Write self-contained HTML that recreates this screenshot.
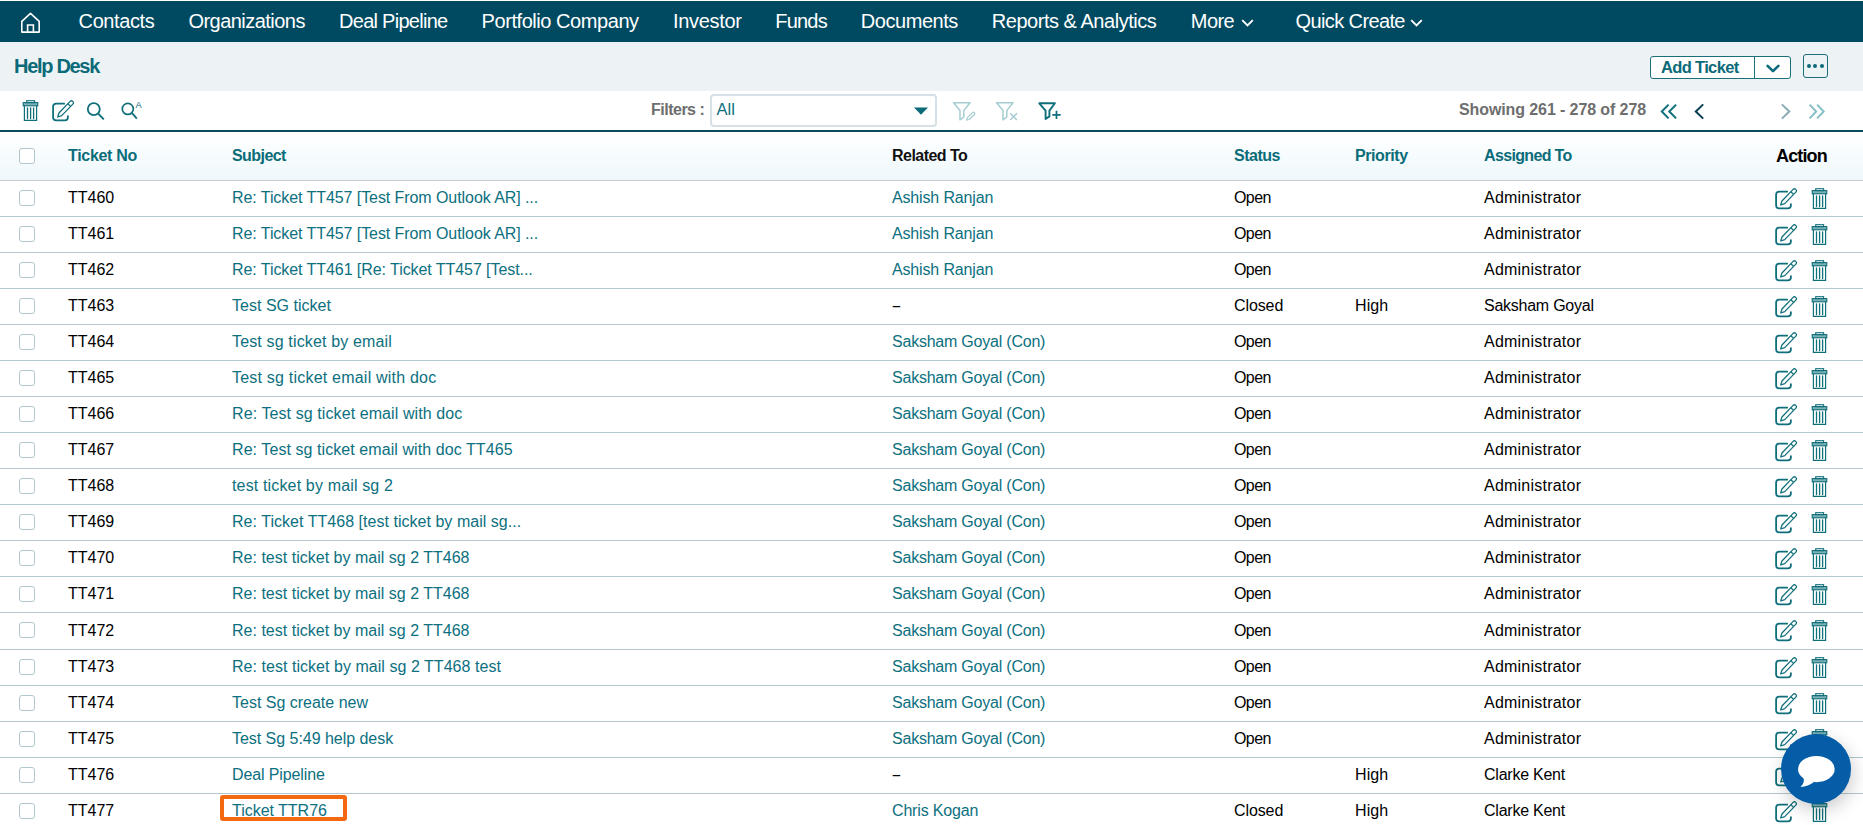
<!DOCTYPE html>
<html><head><meta charset="utf-8"><style>
*{margin:0;padding:0;box-sizing:border-box}
html,body{width:1863px;height:825px;overflow:hidden;background:#fff;font-family:"Liberation Sans",sans-serif}
.abs{position:absolute}
#nav{position:absolute;left:0;top:1px;width:1863px;height:41px;background:#004a61}
.nv{position:absolute;top:0;line-height:40px;font-size:20px;color:#fff;white-space:nowrap;letter-spacing:-0.4px}
#title{position:absolute;left:0;top:42px;width:1863px;height:49px;background:#edf2f5}
#tool{position:absolute;left:0;top:91px;width:1863px;height:39px;background:#fff}
#dark{position:absolute;left:0;top:130px;width:1863px;height:2px;background:#0a4a5c}
#head{position:absolute;left:0;top:132px;width:1863px;height:48px;background:linear-gradient(#fff,#eef8fc)}
.hd{position:absolute;top:0;line-height:48px;font-size:16px;font-weight:bold;color:#0b6c79;white-space:nowrap;letter-spacing:-0.45px}
.row{position:absolute;left:0;width:1863px}
.sep{position:absolute;left:0;width:1863px;height:1px;background:#b3c8cf}
.c{position:absolute;font-size:16px;line-height:35px;white-space:nowrap}
.lnk{color:#0c7080}
.blk{color:#000}
.cb{position:absolute;left:19px;width:16px;height:16px;border:1.3px solid #b1c6cd;border-radius:3px;background:#fff}
.ic{position:absolute;line-height:0}
</style></head><body>
<div id="nav">
<svg class="abs" style="left:20px;top:11px" width="22" height="23" viewBox="0 0 22 23"><path d="M1.8 9.4L10.5 1.3L19.2 9.4V20.1H1.8Z" fill="none" stroke="#fff" stroke-width="1.6" stroke-linejoin="round"/><path d="M7.6 20.1V13H13.4V20.1" fill="none" stroke="#fff" stroke-width="1.6"/></svg>
<span class="nv" style="left:78.6px;letter-spacing:-0.4px">Contacts</span><span class="nv" style="left:188.4px;letter-spacing:-0.53px">Organizations</span><span class="nv" style="left:339px;letter-spacing:-0.72px">Deal Pipeline</span><span class="nv" style="left:481.6px;letter-spacing:-0.44px">Portfolio Company</span><span class="nv" style="left:673px;letter-spacing:-0.33px">Investor</span><span class="nv" style="left:775.2px;letter-spacing:-0.76px">Funds</span><span class="nv" style="left:860.8px;letter-spacing:-0.45px">Documents</span><span class="nv" style="left:991.8px;letter-spacing:-0.47px">Reports &amp; Analytics</span><span class="nv" style="left:1190.8px;letter-spacing:-0.55px">More</span><span class="nv" style="left:1295.6px;letter-spacing:-0.62px">Quick Create</span><svg class="abs" style="left:1241px;top:17.8px" width="13" height="8" viewBox="0 0 13 8"><path d="M1.2 1.2L6.5 6.5L11.8 1.2" fill="none" stroke="#fff" stroke-width="1.9"/></svg><svg class="abs" style="left:1410px;top:17.8px" width="13" height="8" viewBox="0 0 13 8"><path d="M1.2 1.2L6.5 6.5L11.8 1.2" fill="none" stroke="#fff" stroke-width="1.9"/></svg>
</div>
<div id="title">
<span class="abs" style="left:14px;top:0px;line-height:49px;font-size:20px;font-weight:bold;color:#0b6a78;letter-spacing:-1.3px">Help Desk</span>
<div class="abs" style="left:1650px;top:14px;width:141px;height:23px;border:1px solid #1a6f7b;border-radius:3px;background:#fff"></div>
<div class="abs" style="left:1754px;top:14px;width:1px;height:23px;background:#1a6f7b"></div>
<span class="abs" style="left:1661px;top:14px;line-height:23px;font-size:16.5px;font-weight:bold;color:#0b6a78;letter-spacing:-0.65px">Add Ticket</span>
<svg class="abs" style="left:1766px;top:22px" width="14" height="9" viewBox="0 0 14 9"><path d="M1.6 1.8L7 7.2L12.4 1.8" fill="none" stroke="#0b6a78" stroke-width="2.6" stroke-linecap="round" stroke-linejoin="round"/></svg>
<div class="abs" style="left:1803px;top:12px;width:25px;height:24px;border:1px solid #1a6f7b;border-radius:3px"></div>
<div class="abs" style="left:1807px;top:22px;width:4px;height:4px;border-radius:2px;background:#0b6a78"></div>
<div class="abs" style="left:1813.3px;top:22px;width:4px;height:4px;border-radius:2px;background:#0b6a78"></div>
<div class="abs" style="left:1820px;top:22px;width:4px;height:4px;border-radius:2px;background:#0b6a78"></div>
</div>
<div id="tool">
<div class="ic" style="left:22px;top:7.7px"><svg width="17" height="23" viewBox="0 0 17 23"><rect x="4.7" y="1.7" width="7.9" height="1.9" fill="none" stroke="#0f6f7a" stroke-width="1.1"/><rect x="1.2" y="3.6" width="14.6" height="3.2" fill="#0f6f7a" fill-opacity="0.55" stroke="#0f6f7a" stroke-width="1.1"/><path d="M2.4 6.8V21.4H14.6V6.8" fill="none" stroke="#0f6f7a" stroke-width="1.2"/><path d="M5.5 8.8V19.6M8.6 8.8V19.6M11.6 8.8V19.6" stroke="#0f6f7a" stroke-width="1.3" stroke-linecap="round"/></svg></div>
<div class="ic" style="left:51px;top:8.8px"><svg width="24" height="22" viewBox="0 0 24 22"><path d="M13.9 3.7H5.2Q2.1 3.7 2.1 6.8V17.3Q2.1 20.4 5.2 20.4H13.8Q16.9 20.4 16.9 17.3V15.5" fill="none" stroke="#0f6f7a" stroke-width="1.8"/><g transform="translate(6.7 17.0) rotate(-46)"><path d="M0 0L3.8 -1.9H19.8A1.9 1.9 0 0 1 19.8 1.9H3.8Z" fill="none" stroke="#0f6f7a" stroke-width="1.25" stroke-linejoin="round"/><path d="M16.6 -1.9V1.9" stroke="#0f6f7a" stroke-width="1.25"/></g></svg></div>
<svg class="abs" style="left:85px;top:9px" width="21" height="21" viewBox="0 0 21 21"><circle cx="8.8" cy="9.1" r="6.0" fill="none" stroke="#0f6f7a" stroke-width="1.8"/><path d="M13.2 13.6L18.8 19.4" stroke="#0f6f7a" stroke-width="1.9"/></svg>
<svg class="abs" style="left:119px;top:9px" width="26" height="21" viewBox="0 0 26 21"><circle cx="8.8" cy="8.9" r="5.5" fill="none" stroke="#0f6f7a" stroke-width="1.7"/><path d="M12.8 12.9L17.8 18.6" stroke="#0f6f7a" stroke-width="1.8"/></svg><span class="abs" style="left:135.4px;top:9.1px;font-size:9.3px;line-height:10px;color:#0f6f7a">A</span>
<span class="abs" style="left:651px;top:0;line-height:38px;font-size:16px;font-weight:bold;color:#6e6e6e;letter-spacing:-0.5px">Filters :</span>
<div class="abs" style="left:710px;top:3px;width:227px;height:33px;border:2px solid #d5e1e6;border-radius:4px;background:#fff"></div>
<span class="abs" style="left:716.5px;top:2px;line-height:32px;font-size:16.5px;color:#0c7080">All</span>
<svg class="abs" style="left:913px;top:16px" width="16" height="8" viewBox="0 0 16 8"><path d="M1 0.5H15L8 7.8Z" fill="#0b6a78"/></svg>
<svg class="abs" style="left:951px;top:9px" width="27" height="23" viewBox="0 0 27 23"><path d="M2.6 2.8H19L12.8 10.6V17L9 19.8V10.6Z" fill="none" stroke="#a6cdd1" stroke-width="1.5" stroke-linejoin="round"/><g transform="translate(15.6 20.2) rotate(-44)"><path d="M0 0L2.3 -1.3H9.6A1.3 1.3 0 0 1 9.6 1.3H2.3Z" fill="none" stroke="#a6cdd1" stroke-width="1.2" stroke-linejoin="round"/></g></svg>
<svg class="abs" style="left:994px;top:9px" width="27" height="23" viewBox="0 0 27 23"><path d="M2.6 2.8H19L12.8 10.6V17L9 19.8V10.6Z" fill="none" stroke="#a6cdd1" stroke-width="1.5" stroke-linejoin="round"/><path d="M16.2 13.2L23 20M23 13.2L16.2 20" stroke="#a6cdd1" stroke-width="1.5"/></svg>
<svg class="abs" style="left:1037px;top:9px" width="27" height="23" viewBox="0 0 27 23"><path d="M2.3 3.3H17.9L12.4 10.6V16.4L8.6 19V10.6Z" fill="none" stroke="#0f6f7a" stroke-width="1.9" stroke-linejoin="round"/><path d="M19.5 10.7V19.1M15.3 14.9H23.7" stroke="#0f6f7a" stroke-width="1.7"/></svg>
<span class="abs" style="left:1459px;top:0;line-height:37px;font-size:16px;font-weight:bold;color:#6e6e6e;letter-spacing:-0.1px">Showing 261 - 278 of 278</span>
<svg class="abs" style="left:1659px;top:12px" width="20" height="18" viewBox="0 0 20 18"><path d="M9.6 1.6L2.8 8.5L9.6 15.4M17.1 1.6L10.3 8.5L17.1 15.4" fill="none" stroke="#0f6f7a" stroke-width="2"/></svg>
<svg class="abs" style="left:1692px;top:11px" width="14" height="19" viewBox="0 0 14 19"><path d="M11.2 2.4L3.8 9.5L11.2 16.6" fill="none" stroke="#083d52" stroke-width="2"/></svg>
<svg class="abs" style="left:1779px;top:11px" width="14" height="19" viewBox="0 0 14 19"><path d="M2.9 2.4L10.3 9.5L2.9 16.6" fill="none" stroke="#8aa9b5" stroke-width="2"/></svg>
<svg class="abs" style="left:1807px;top:12px" width="20" height="18" viewBox="0 0 20 18"><path d="M2.6 1.6L9.2 8.5L2.6 15.4M10.1 1.6L16.7 8.5L10.1 15.4" fill="none" stroke="#86c0c5" stroke-width="2"/></svg>
</div>
<div id="dark"></div>
<div id="head">
<div class="cb" style="top:16px"></div>
<span class="hd" style="left:68px;letter-spacing:-0.312px">Ticket No</span>
<span class="hd" style="left:232px;letter-spacing:-0.562px">Subject</span>
<span class="hd" style="left:892px;color:#111;letter-spacing:-0.528px">Related To</span>
<span class="hd" style="left:1234px;letter-spacing:-0.5px">Status</span>
<span class="hd" style="left:1355px;letter-spacing:-0.411px">Priority</span>
<span class="hd" style="left:1484px;letter-spacing:-0.65px">Assigned To</span>
<span class="hd" style="left:1776px;color:#000;font-size:18px;letter-spacing:-0.85px">Action</span>
</div>
<div class="sep" style="top:180px;background:#c9cdd0"></div>
<div class="cb" style="top:190px"></div><span class="c blk" style="left:68px;top:180px;letter-spacing:0.0px">TT460</span><span class="c lnk" style="left:232px;top:180px;letter-spacing:-0.071px">Re: Ticket TT457 [Test From Outlook AR] ...</span><span class="c lnk" style="left:892px;top:180px;letter-spacing:-0.156px">Ashish Ranjan</span><span class="c blk" style="left:1234px;top:180px;letter-spacing:-0.583px">Open</span><span class="c blk" style="left:1484px;top:180px;letter-spacing:0.229px">Administrator</span><div class="ic" style="left:1774px;top:187.5px"><svg width="24" height="22" viewBox="0 0 24 22"><path d="M13.9 3.7H5.2Q2.1 3.7 2.1 6.8V17.3Q2.1 20.4 5.2 20.4H13.8Q16.9 20.4 16.9 17.3V15.5" fill="none" stroke="#0f6f7a" stroke-width="1.8"/><g transform="translate(6.7 17.0) rotate(-46)"><path d="M0 0L3.8 -1.9H19.8A1.9 1.9 0 0 1 19.8 1.9H3.8Z" fill="none" stroke="#0f6f7a" stroke-width="1.25" stroke-linejoin="round"/><path d="M16.6 -1.9V1.9" stroke="#0f6f7a" stroke-width="1.25"/></g></svg></div><div class="ic" style="left:1810.8px;top:187px"><svg width="17" height="23" viewBox="0 0 17 23"><rect x="4.7" y="1.7" width="7.9" height="1.9" fill="none" stroke="#0f6f7a" stroke-width="1.1"/><rect x="1.2" y="3.6" width="14.6" height="3.2" fill="#0f6f7a" fill-opacity="0.55" stroke="#0f6f7a" stroke-width="1.1"/><path d="M2.4 6.8V21.4H14.6V6.8" fill="none" stroke="#0f6f7a" stroke-width="1.2"/><path d="M5.5 8.8V19.6M8.6 8.8V19.6M11.6 8.8V19.6" stroke="#0f6f7a" stroke-width="1.3" stroke-linecap="round"/></svg></div><div class="sep" style="top:216px"></div><div class="cb" style="top:226px"></div><span class="c blk" style="left:68px;top:216px;letter-spacing:0.0px">TT461</span><span class="c lnk" style="left:232px;top:216px;letter-spacing:-0.071px">Re: Ticket TT457 [Test From Outlook AR] ...</span><span class="c lnk" style="left:892px;top:216px;letter-spacing:-0.156px">Ashish Ranjan</span><span class="c blk" style="left:1234px;top:216px;letter-spacing:-0.583px">Open</span><span class="c blk" style="left:1484px;top:216px;letter-spacing:0.229px">Administrator</span><div class="ic" style="left:1774px;top:223.5px"><svg width="24" height="22" viewBox="0 0 24 22"><path d="M13.9 3.7H5.2Q2.1 3.7 2.1 6.8V17.3Q2.1 20.4 5.2 20.4H13.8Q16.9 20.4 16.9 17.3V15.5" fill="none" stroke="#0f6f7a" stroke-width="1.8"/><g transform="translate(6.7 17.0) rotate(-46)"><path d="M0 0L3.8 -1.9H19.8A1.9 1.9 0 0 1 19.8 1.9H3.8Z" fill="none" stroke="#0f6f7a" stroke-width="1.25" stroke-linejoin="round"/><path d="M16.6 -1.9V1.9" stroke="#0f6f7a" stroke-width="1.25"/></g></svg></div><div class="ic" style="left:1810.8px;top:223px"><svg width="17" height="23" viewBox="0 0 17 23"><rect x="4.7" y="1.7" width="7.9" height="1.9" fill="none" stroke="#0f6f7a" stroke-width="1.1"/><rect x="1.2" y="3.6" width="14.6" height="3.2" fill="#0f6f7a" fill-opacity="0.55" stroke="#0f6f7a" stroke-width="1.1"/><path d="M2.4 6.8V21.4H14.6V6.8" fill="none" stroke="#0f6f7a" stroke-width="1.2"/><path d="M5.5 8.8V19.6M8.6 8.8V19.6M11.6 8.8V19.6" stroke="#0f6f7a" stroke-width="1.3" stroke-linecap="round"/></svg></div><div class="sep" style="top:252px"></div><div class="cb" style="top:262px"></div><span class="c blk" style="left:68px;top:252px;letter-spacing:0.0px">TT462</span><span class="c lnk" style="left:232px;top:252px;letter-spacing:-0.065px">Re: Ticket TT461 [Re: Ticket TT457 [Test...</span><span class="c lnk" style="left:892px;top:252px;letter-spacing:-0.156px">Ashish Ranjan</span><span class="c blk" style="left:1234px;top:252px;letter-spacing:-0.583px">Open</span><span class="c blk" style="left:1484px;top:252px;letter-spacing:0.229px">Administrator</span><div class="ic" style="left:1774px;top:259.5px"><svg width="24" height="22" viewBox="0 0 24 22"><path d="M13.9 3.7H5.2Q2.1 3.7 2.1 6.8V17.3Q2.1 20.4 5.2 20.4H13.8Q16.9 20.4 16.9 17.3V15.5" fill="none" stroke="#0f6f7a" stroke-width="1.8"/><g transform="translate(6.7 17.0) rotate(-46)"><path d="M0 0L3.8 -1.9H19.8A1.9 1.9 0 0 1 19.8 1.9H3.8Z" fill="none" stroke="#0f6f7a" stroke-width="1.25" stroke-linejoin="round"/><path d="M16.6 -1.9V1.9" stroke="#0f6f7a" stroke-width="1.25"/></g></svg></div><div class="ic" style="left:1810.8px;top:259px"><svg width="17" height="23" viewBox="0 0 17 23"><rect x="4.7" y="1.7" width="7.9" height="1.9" fill="none" stroke="#0f6f7a" stroke-width="1.1"/><rect x="1.2" y="3.6" width="14.6" height="3.2" fill="#0f6f7a" fill-opacity="0.55" stroke="#0f6f7a" stroke-width="1.1"/><path d="M2.4 6.8V21.4H14.6V6.8" fill="none" stroke="#0f6f7a" stroke-width="1.2"/><path d="M5.5 8.8V19.6M8.6 8.8V19.6M11.6 8.8V19.6" stroke="#0f6f7a" stroke-width="1.3" stroke-linecap="round"/></svg></div><div class="sep" style="top:288px"></div><div class="cb" style="top:298px"></div><span class="c blk" style="left:68px;top:288px;letter-spacing:0.0px">TT463</span><span class="c lnk" style="left:232px;top:288px;letter-spacing:0.022px">Test SG ticket</span><span class="c blk" style="left:892px;top:288px;letter-spacing:-1.75px">--</span><span class="c blk" style="left:1234px;top:288px;letter-spacing:-0.1px">Closed</span><span class="c blk" style="left:1355px;top:288px;letter-spacing:0.083px">High</span><span class="c blk" style="left:1484px;top:288px;letter-spacing:-0.25px">Saksham Goyal</span><div class="ic" style="left:1774px;top:295.5px"><svg width="24" height="22" viewBox="0 0 24 22"><path d="M13.9 3.7H5.2Q2.1 3.7 2.1 6.8V17.3Q2.1 20.4 5.2 20.4H13.8Q16.9 20.4 16.9 17.3V15.5" fill="none" stroke="#0f6f7a" stroke-width="1.8"/><g transform="translate(6.7 17.0) rotate(-46)"><path d="M0 0L3.8 -1.9H19.8A1.9 1.9 0 0 1 19.8 1.9H3.8Z" fill="none" stroke="#0f6f7a" stroke-width="1.25" stroke-linejoin="round"/><path d="M16.6 -1.9V1.9" stroke="#0f6f7a" stroke-width="1.25"/></g></svg></div><div class="ic" style="left:1810.8px;top:295px"><svg width="17" height="23" viewBox="0 0 17 23"><rect x="4.7" y="1.7" width="7.9" height="1.9" fill="none" stroke="#0f6f7a" stroke-width="1.1"/><rect x="1.2" y="3.6" width="14.6" height="3.2" fill="#0f6f7a" fill-opacity="0.55" stroke="#0f6f7a" stroke-width="1.1"/><path d="M2.4 6.8V21.4H14.6V6.8" fill="none" stroke="#0f6f7a" stroke-width="1.2"/><path d="M5.5 8.8V19.6M8.6 8.8V19.6M11.6 8.8V19.6" stroke="#0f6f7a" stroke-width="1.3" stroke-linecap="round"/></svg></div><div class="sep" style="top:324px"></div><div class="cb" style="top:334px"></div><span class="c blk" style="left:68px;top:324px;letter-spacing:0.0px">TT464</span><span class="c lnk" style="left:232px;top:324px;letter-spacing:0.151px">Test sg ticket by email</span><span class="c lnk" style="left:892px;top:324px;letter-spacing:-0.222px">Saksham Goyal (Con)</span><span class="c blk" style="left:1234px;top:324px;letter-spacing:-0.583px">Open</span><span class="c blk" style="left:1484px;top:324px;letter-spacing:0.229px">Administrator</span><div class="ic" style="left:1774px;top:331.5px"><svg width="24" height="22" viewBox="0 0 24 22"><path d="M13.9 3.7H5.2Q2.1 3.7 2.1 6.8V17.3Q2.1 20.4 5.2 20.4H13.8Q16.9 20.4 16.9 17.3V15.5" fill="none" stroke="#0f6f7a" stroke-width="1.8"/><g transform="translate(6.7 17.0) rotate(-46)"><path d="M0 0L3.8 -1.9H19.8A1.9 1.9 0 0 1 19.8 1.9H3.8Z" fill="none" stroke="#0f6f7a" stroke-width="1.25" stroke-linejoin="round"/><path d="M16.6 -1.9V1.9" stroke="#0f6f7a" stroke-width="1.25"/></g></svg></div><div class="ic" style="left:1810.8px;top:331px"><svg width="17" height="23" viewBox="0 0 17 23"><rect x="4.7" y="1.7" width="7.9" height="1.9" fill="none" stroke="#0f6f7a" stroke-width="1.1"/><rect x="1.2" y="3.6" width="14.6" height="3.2" fill="#0f6f7a" fill-opacity="0.55" stroke="#0f6f7a" stroke-width="1.1"/><path d="M2.4 6.8V21.4H14.6V6.8" fill="none" stroke="#0f6f7a" stroke-width="1.2"/><path d="M5.5 8.8V19.6M8.6 8.8V19.6M11.6 8.8V19.6" stroke="#0f6f7a" stroke-width="1.3" stroke-linecap="round"/></svg></div><div class="sep" style="top:360px"></div><div class="cb" style="top:370px"></div><span class="c blk" style="left:68px;top:360px;letter-spacing:0.0px">TT465</span><span class="c lnk" style="left:232px;top:360px;letter-spacing:0.212px">Test sg ticket email with doc</span><span class="c lnk" style="left:892px;top:360px;letter-spacing:-0.222px">Saksham Goyal (Con)</span><span class="c blk" style="left:1234px;top:360px;letter-spacing:-0.583px">Open</span><span class="c blk" style="left:1484px;top:360px;letter-spacing:0.229px">Administrator</span><div class="ic" style="left:1774px;top:367.5px"><svg width="24" height="22" viewBox="0 0 24 22"><path d="M13.9 3.7H5.2Q2.1 3.7 2.1 6.8V17.3Q2.1 20.4 5.2 20.4H13.8Q16.9 20.4 16.9 17.3V15.5" fill="none" stroke="#0f6f7a" stroke-width="1.8"/><g transform="translate(6.7 17.0) rotate(-46)"><path d="M0 0L3.8 -1.9H19.8A1.9 1.9 0 0 1 19.8 1.9H3.8Z" fill="none" stroke="#0f6f7a" stroke-width="1.25" stroke-linejoin="round"/><path d="M16.6 -1.9V1.9" stroke="#0f6f7a" stroke-width="1.25"/></g></svg></div><div class="ic" style="left:1810.8px;top:367px"><svg width="17" height="23" viewBox="0 0 17 23"><rect x="4.7" y="1.7" width="7.9" height="1.9" fill="none" stroke="#0f6f7a" stroke-width="1.1"/><rect x="1.2" y="3.6" width="14.6" height="3.2" fill="#0f6f7a" fill-opacity="0.55" stroke="#0f6f7a" stroke-width="1.1"/><path d="M2.4 6.8V21.4H14.6V6.8" fill="none" stroke="#0f6f7a" stroke-width="1.2"/><path d="M5.5 8.8V19.6M8.6 8.8V19.6M11.6 8.8V19.6" stroke="#0f6f7a" stroke-width="1.3" stroke-linecap="round"/></svg></div><div class="sep" style="top:396px"></div><div class="cb" style="top:406px"></div><span class="c blk" style="left:68px;top:396px;letter-spacing:0.0px">TT466</span><span class="c lnk" style="left:232px;top:396px;letter-spacing:0.091px">Re: Test sg ticket email with doc</span><span class="c lnk" style="left:892px;top:396px;letter-spacing:-0.222px">Saksham Goyal (Con)</span><span class="c blk" style="left:1234px;top:396px;letter-spacing:-0.583px">Open</span><span class="c blk" style="left:1484px;top:396px;letter-spacing:0.229px">Administrator</span><div class="ic" style="left:1774px;top:403.5px"><svg width="24" height="22" viewBox="0 0 24 22"><path d="M13.9 3.7H5.2Q2.1 3.7 2.1 6.8V17.3Q2.1 20.4 5.2 20.4H13.8Q16.9 20.4 16.9 17.3V15.5" fill="none" stroke="#0f6f7a" stroke-width="1.8"/><g transform="translate(6.7 17.0) rotate(-46)"><path d="M0 0L3.8 -1.9H19.8A1.9 1.9 0 0 1 19.8 1.9H3.8Z" fill="none" stroke="#0f6f7a" stroke-width="1.25" stroke-linejoin="round"/><path d="M16.6 -1.9V1.9" stroke="#0f6f7a" stroke-width="1.25"/></g></svg></div><div class="ic" style="left:1810.8px;top:403px"><svg width="17" height="23" viewBox="0 0 17 23"><rect x="4.7" y="1.7" width="7.9" height="1.9" fill="none" stroke="#0f6f7a" stroke-width="1.1"/><rect x="1.2" y="3.6" width="14.6" height="3.2" fill="#0f6f7a" fill-opacity="0.55" stroke="#0f6f7a" stroke-width="1.1"/><path d="M2.4 6.8V21.4H14.6V6.8" fill="none" stroke="#0f6f7a" stroke-width="1.2"/><path d="M5.5 8.8V19.6M8.6 8.8V19.6M11.6 8.8V19.6" stroke="#0f6f7a" stroke-width="1.3" stroke-linecap="round"/></svg></div><div class="sep" style="top:432px"></div><div class="cb" style="top:442px"></div><span class="c blk" style="left:68px;top:432px;letter-spacing:0.0px">TT467</span><span class="c lnk" style="left:232px;top:432px;letter-spacing:0.073px">Re: Test sg ticket email with doc TT465</span><span class="c lnk" style="left:892px;top:432px;letter-spacing:-0.222px">Saksham Goyal (Con)</span><span class="c blk" style="left:1234px;top:432px;letter-spacing:-0.583px">Open</span><span class="c blk" style="left:1484px;top:432px;letter-spacing:0.229px">Administrator</span><div class="ic" style="left:1774px;top:439.5px"><svg width="24" height="22" viewBox="0 0 24 22"><path d="M13.9 3.7H5.2Q2.1 3.7 2.1 6.8V17.3Q2.1 20.4 5.2 20.4H13.8Q16.9 20.4 16.9 17.3V15.5" fill="none" stroke="#0f6f7a" stroke-width="1.8"/><g transform="translate(6.7 17.0) rotate(-46)"><path d="M0 0L3.8 -1.9H19.8A1.9 1.9 0 0 1 19.8 1.9H3.8Z" fill="none" stroke="#0f6f7a" stroke-width="1.25" stroke-linejoin="round"/><path d="M16.6 -1.9V1.9" stroke="#0f6f7a" stroke-width="1.25"/></g></svg></div><div class="ic" style="left:1810.8px;top:439px"><svg width="17" height="23" viewBox="0 0 17 23"><rect x="4.7" y="1.7" width="7.9" height="1.9" fill="none" stroke="#0f6f7a" stroke-width="1.1"/><rect x="1.2" y="3.6" width="14.6" height="3.2" fill="#0f6f7a" fill-opacity="0.55" stroke="#0f6f7a" stroke-width="1.1"/><path d="M2.4 6.8V21.4H14.6V6.8" fill="none" stroke="#0f6f7a" stroke-width="1.2"/><path d="M5.5 8.8V19.6M8.6 8.8V19.6M11.6 8.8V19.6" stroke="#0f6f7a" stroke-width="1.3" stroke-linecap="round"/></svg></div><div class="sep" style="top:468px"></div><div class="cb" style="top:478px"></div><span class="c blk" style="left:68px;top:468px;letter-spacing:0.0px">TT468</span><span class="c lnk" style="left:232px;top:468px;letter-spacing:0.152px">test ticket by mail sg 2</span><span class="c lnk" style="left:892px;top:468px;letter-spacing:-0.222px">Saksham Goyal (Con)</span><span class="c blk" style="left:1234px;top:468px;letter-spacing:-0.583px">Open</span><span class="c blk" style="left:1484px;top:468px;letter-spacing:0.229px">Administrator</span><div class="ic" style="left:1774px;top:475.5px"><svg width="24" height="22" viewBox="0 0 24 22"><path d="M13.9 3.7H5.2Q2.1 3.7 2.1 6.8V17.3Q2.1 20.4 5.2 20.4H13.8Q16.9 20.4 16.9 17.3V15.5" fill="none" stroke="#0f6f7a" stroke-width="1.8"/><g transform="translate(6.7 17.0) rotate(-46)"><path d="M0 0L3.8 -1.9H19.8A1.9 1.9 0 0 1 19.8 1.9H3.8Z" fill="none" stroke="#0f6f7a" stroke-width="1.25" stroke-linejoin="round"/><path d="M16.6 -1.9V1.9" stroke="#0f6f7a" stroke-width="1.25"/></g></svg></div><div class="ic" style="left:1810.8px;top:475px"><svg width="17" height="23" viewBox="0 0 17 23"><rect x="4.7" y="1.7" width="7.9" height="1.9" fill="none" stroke="#0f6f7a" stroke-width="1.1"/><rect x="1.2" y="3.6" width="14.6" height="3.2" fill="#0f6f7a" fill-opacity="0.55" stroke="#0f6f7a" stroke-width="1.1"/><path d="M2.4 6.8V21.4H14.6V6.8" fill="none" stroke="#0f6f7a" stroke-width="1.2"/><path d="M5.5 8.8V19.6M8.6 8.8V19.6M11.6 8.8V19.6" stroke="#0f6f7a" stroke-width="1.3" stroke-linecap="round"/></svg></div><div class="sep" style="top:504px"></div><div class="cb" style="top:514px"></div><span class="c blk" style="left:68px;top:504px;letter-spacing:0.0px">TT469</span><span class="c lnk" style="left:232px;top:504px;letter-spacing:0.033px">Re: Ticket TT468 [test ticket by mail sg...</span><span class="c lnk" style="left:892px;top:504px;letter-spacing:-0.222px">Saksham Goyal (Con)</span><span class="c blk" style="left:1234px;top:504px;letter-spacing:-0.583px">Open</span><span class="c blk" style="left:1484px;top:504px;letter-spacing:0.229px">Administrator</span><div class="ic" style="left:1774px;top:511.5px"><svg width="24" height="22" viewBox="0 0 24 22"><path d="M13.9 3.7H5.2Q2.1 3.7 2.1 6.8V17.3Q2.1 20.4 5.2 20.4H13.8Q16.9 20.4 16.9 17.3V15.5" fill="none" stroke="#0f6f7a" stroke-width="1.8"/><g transform="translate(6.7 17.0) rotate(-46)"><path d="M0 0L3.8 -1.9H19.8A1.9 1.9 0 0 1 19.8 1.9H3.8Z" fill="none" stroke="#0f6f7a" stroke-width="1.25" stroke-linejoin="round"/><path d="M16.6 -1.9V1.9" stroke="#0f6f7a" stroke-width="1.25"/></g></svg></div><div class="ic" style="left:1810.8px;top:511px"><svg width="17" height="23" viewBox="0 0 17 23"><rect x="4.7" y="1.7" width="7.9" height="1.9" fill="none" stroke="#0f6f7a" stroke-width="1.1"/><rect x="1.2" y="3.6" width="14.6" height="3.2" fill="#0f6f7a" fill-opacity="0.55" stroke="#0f6f7a" stroke-width="1.1"/><path d="M2.4 6.8V21.4H14.6V6.8" fill="none" stroke="#0f6f7a" stroke-width="1.2"/><path d="M5.5 8.8V19.6M8.6 8.8V19.6M11.6 8.8V19.6" stroke="#0f6f7a" stroke-width="1.3" stroke-linecap="round"/></svg></div><div class="sep" style="top:540px"></div><div class="cb" style="top:550px"></div><span class="c blk" style="left:68px;top:540px;letter-spacing:0.0px">TT470</span><span class="c lnk" style="left:232px;top:540px;letter-spacing:0.011px">Re: test ticket by mail sg 2 TT468</span><span class="c lnk" style="left:892px;top:540px;letter-spacing:-0.222px">Saksham Goyal (Con)</span><span class="c blk" style="left:1234px;top:540px;letter-spacing:-0.583px">Open</span><span class="c blk" style="left:1484px;top:540px;letter-spacing:0.229px">Administrator</span><div class="ic" style="left:1774px;top:547.5px"><svg width="24" height="22" viewBox="0 0 24 22"><path d="M13.9 3.7H5.2Q2.1 3.7 2.1 6.8V17.3Q2.1 20.4 5.2 20.4H13.8Q16.9 20.4 16.9 17.3V15.5" fill="none" stroke="#0f6f7a" stroke-width="1.8"/><g transform="translate(6.7 17.0) rotate(-46)"><path d="M0 0L3.8 -1.9H19.8A1.9 1.9 0 0 1 19.8 1.9H3.8Z" fill="none" stroke="#0f6f7a" stroke-width="1.25" stroke-linejoin="round"/><path d="M16.6 -1.9V1.9" stroke="#0f6f7a" stroke-width="1.25"/></g></svg></div><div class="ic" style="left:1810.8px;top:547px"><svg width="17" height="23" viewBox="0 0 17 23"><rect x="4.7" y="1.7" width="7.9" height="1.9" fill="none" stroke="#0f6f7a" stroke-width="1.1"/><rect x="1.2" y="3.6" width="14.6" height="3.2" fill="#0f6f7a" fill-opacity="0.55" stroke="#0f6f7a" stroke-width="1.1"/><path d="M2.4 6.8V21.4H14.6V6.8" fill="none" stroke="#0f6f7a" stroke-width="1.2"/><path d="M5.5 8.8V19.6M8.6 8.8V19.6M11.6 8.8V19.6" stroke="#0f6f7a" stroke-width="1.3" stroke-linecap="round"/></svg></div><div class="sep" style="top:576px"></div><div class="cb" style="top:586px"></div><span class="c blk" style="left:68px;top:576px;letter-spacing:0.0px">TT471</span><span class="c lnk" style="left:232px;top:576px;letter-spacing:0.011px">Re: test ticket by mail sg 2 TT468</span><span class="c lnk" style="left:892px;top:576px;letter-spacing:-0.222px">Saksham Goyal (Con)</span><span class="c blk" style="left:1234px;top:576px;letter-spacing:-0.583px">Open</span><span class="c blk" style="left:1484px;top:576px;letter-spacing:0.229px">Administrator</span><div class="ic" style="left:1774px;top:583.5px"><svg width="24" height="22" viewBox="0 0 24 22"><path d="M13.9 3.7H5.2Q2.1 3.7 2.1 6.8V17.3Q2.1 20.4 5.2 20.4H13.8Q16.9 20.4 16.9 17.3V15.5" fill="none" stroke="#0f6f7a" stroke-width="1.8"/><g transform="translate(6.7 17.0) rotate(-46)"><path d="M0 0L3.8 -1.9H19.8A1.9 1.9 0 0 1 19.8 1.9H3.8Z" fill="none" stroke="#0f6f7a" stroke-width="1.25" stroke-linejoin="round"/><path d="M16.6 -1.9V1.9" stroke="#0f6f7a" stroke-width="1.25"/></g></svg></div><div class="ic" style="left:1810.8px;top:583px"><svg width="17" height="23" viewBox="0 0 17 23"><rect x="4.7" y="1.7" width="7.9" height="1.9" fill="none" stroke="#0f6f7a" stroke-width="1.1"/><rect x="1.2" y="3.6" width="14.6" height="3.2" fill="#0f6f7a" fill-opacity="0.55" stroke="#0f6f7a" stroke-width="1.1"/><path d="M2.4 6.8V21.4H14.6V6.8" fill="none" stroke="#0f6f7a" stroke-width="1.2"/><path d="M5.5 8.8V19.6M8.6 8.8V19.6M11.6 8.8V19.6" stroke="#0f6f7a" stroke-width="1.3" stroke-linecap="round"/></svg></div><div class="sep" style="top:612px"></div><div class="cb" style="top:622px"></div><span class="c blk" style="left:68px;top:613px;letter-spacing:0.0px">TT472</span><span class="c lnk" style="left:232px;top:613px;letter-spacing:0.011px">Re: test ticket by mail sg 2 TT468</span><span class="c lnk" style="left:892px;top:613px;letter-spacing:-0.222px">Saksham Goyal (Con)</span><span class="c blk" style="left:1234px;top:613px;letter-spacing:-0.583px">Open</span><span class="c blk" style="left:1484px;top:613px;letter-spacing:0.229px">Administrator</span><div class="ic" style="left:1774px;top:619.5px"><svg width="24" height="22" viewBox="0 0 24 22"><path d="M13.9 3.7H5.2Q2.1 3.7 2.1 6.8V17.3Q2.1 20.4 5.2 20.4H13.8Q16.9 20.4 16.9 17.3V15.5" fill="none" stroke="#0f6f7a" stroke-width="1.8"/><g transform="translate(6.7 17.0) rotate(-46)"><path d="M0 0L3.8 -1.9H19.8A1.9 1.9 0 0 1 19.8 1.9H3.8Z" fill="none" stroke="#0f6f7a" stroke-width="1.25" stroke-linejoin="round"/><path d="M16.6 -1.9V1.9" stroke="#0f6f7a" stroke-width="1.25"/></g></svg></div><div class="ic" style="left:1810.8px;top:619px"><svg width="17" height="23" viewBox="0 0 17 23"><rect x="4.7" y="1.7" width="7.9" height="1.9" fill="none" stroke="#0f6f7a" stroke-width="1.1"/><rect x="1.2" y="3.6" width="14.6" height="3.2" fill="#0f6f7a" fill-opacity="0.55" stroke="#0f6f7a" stroke-width="1.1"/><path d="M2.4 6.8V21.4H14.6V6.8" fill="none" stroke="#0f6f7a" stroke-width="1.2"/><path d="M5.5 8.8V19.6M8.6 8.8V19.6M11.6 8.8V19.6" stroke="#0f6f7a" stroke-width="1.3" stroke-linecap="round"/></svg></div><div class="sep" style="top:649px"></div><div class="cb" style="top:659px"></div><span class="c blk" style="left:68px;top:649px;letter-spacing:0.0px">TT473</span><span class="c lnk" style="left:232px;top:649px;letter-spacing:0.04px">Re: test ticket by mail sg 2 TT468 test</span><span class="c lnk" style="left:892px;top:649px;letter-spacing:-0.222px">Saksham Goyal (Con)</span><span class="c blk" style="left:1234px;top:649px;letter-spacing:-0.583px">Open</span><span class="c blk" style="left:1484px;top:649px;letter-spacing:0.229px">Administrator</span><div class="ic" style="left:1774px;top:656.5px"><svg width="24" height="22" viewBox="0 0 24 22"><path d="M13.9 3.7H5.2Q2.1 3.7 2.1 6.8V17.3Q2.1 20.4 5.2 20.4H13.8Q16.9 20.4 16.9 17.3V15.5" fill="none" stroke="#0f6f7a" stroke-width="1.8"/><g transform="translate(6.7 17.0) rotate(-46)"><path d="M0 0L3.8 -1.9H19.8A1.9 1.9 0 0 1 19.8 1.9H3.8Z" fill="none" stroke="#0f6f7a" stroke-width="1.25" stroke-linejoin="round"/><path d="M16.6 -1.9V1.9" stroke="#0f6f7a" stroke-width="1.25"/></g></svg></div><div class="ic" style="left:1810.8px;top:656px"><svg width="17" height="23" viewBox="0 0 17 23"><rect x="4.7" y="1.7" width="7.9" height="1.9" fill="none" stroke="#0f6f7a" stroke-width="1.1"/><rect x="1.2" y="3.6" width="14.6" height="3.2" fill="#0f6f7a" fill-opacity="0.55" stroke="#0f6f7a" stroke-width="1.1"/><path d="M2.4 6.8V21.4H14.6V6.8" fill="none" stroke="#0f6f7a" stroke-width="1.2"/><path d="M5.5 8.8V19.6M8.6 8.8V19.6M11.6 8.8V19.6" stroke="#0f6f7a" stroke-width="1.3" stroke-linecap="round"/></svg></div><div class="sep" style="top:685px"></div><div class="cb" style="top:695px"></div><span class="c blk" style="left:68px;top:685px;letter-spacing:0.0px">TT474</span><span class="c lnk" style="left:232px;top:685px;letter-spacing:-0.006px">Test Sg create new</span><span class="c lnk" style="left:892px;top:685px;letter-spacing:-0.222px">Saksham Goyal (Con)</span><span class="c blk" style="left:1234px;top:685px;letter-spacing:-0.583px">Open</span><span class="c blk" style="left:1484px;top:685px;letter-spacing:0.229px">Administrator</span><div class="ic" style="left:1774px;top:692.5px"><svg width="24" height="22" viewBox="0 0 24 22"><path d="M13.9 3.7H5.2Q2.1 3.7 2.1 6.8V17.3Q2.1 20.4 5.2 20.4H13.8Q16.9 20.4 16.9 17.3V15.5" fill="none" stroke="#0f6f7a" stroke-width="1.8"/><g transform="translate(6.7 17.0) rotate(-46)"><path d="M0 0L3.8 -1.9H19.8A1.9 1.9 0 0 1 19.8 1.9H3.8Z" fill="none" stroke="#0f6f7a" stroke-width="1.25" stroke-linejoin="round"/><path d="M16.6 -1.9V1.9" stroke="#0f6f7a" stroke-width="1.25"/></g></svg></div><div class="ic" style="left:1810.8px;top:692px"><svg width="17" height="23" viewBox="0 0 17 23"><rect x="4.7" y="1.7" width="7.9" height="1.9" fill="none" stroke="#0f6f7a" stroke-width="1.1"/><rect x="1.2" y="3.6" width="14.6" height="3.2" fill="#0f6f7a" fill-opacity="0.55" stroke="#0f6f7a" stroke-width="1.1"/><path d="M2.4 6.8V21.4H14.6V6.8" fill="none" stroke="#0f6f7a" stroke-width="1.2"/><path d="M5.5 8.8V19.6M8.6 8.8V19.6M11.6 8.8V19.6" stroke="#0f6f7a" stroke-width="1.3" stroke-linecap="round"/></svg></div><div class="sep" style="top:721px"></div><div class="cb" style="top:731px"></div><span class="c blk" style="left:68px;top:721px;letter-spacing:0.0px">TT475</span><span class="c lnk" style="left:232px;top:721px;letter-spacing:-0.035px">Test Sg 5:49 help desk</span><span class="c lnk" style="left:892px;top:721px;letter-spacing:-0.222px">Saksham Goyal (Con)</span><span class="c blk" style="left:1234px;top:721px;letter-spacing:-0.583px">Open</span><span class="c blk" style="left:1484px;top:721px;letter-spacing:0.229px">Administrator</span><div class="ic" style="left:1774px;top:728.5px"><svg width="24" height="22" viewBox="0 0 24 22"><path d="M13.9 3.7H5.2Q2.1 3.7 2.1 6.8V17.3Q2.1 20.4 5.2 20.4H13.8Q16.9 20.4 16.9 17.3V15.5" fill="none" stroke="#0f6f7a" stroke-width="1.8"/><g transform="translate(6.7 17.0) rotate(-46)"><path d="M0 0L3.8 -1.9H19.8A1.9 1.9 0 0 1 19.8 1.9H3.8Z" fill="none" stroke="#0f6f7a" stroke-width="1.25" stroke-linejoin="round"/><path d="M16.6 -1.9V1.9" stroke="#0f6f7a" stroke-width="1.25"/></g></svg></div><div class="ic" style="left:1810.8px;top:728px"><svg width="17" height="23" viewBox="0 0 17 23"><rect x="4.7" y="1.7" width="7.9" height="1.9" fill="none" stroke="#0f6f7a" stroke-width="1.1"/><rect x="1.2" y="3.6" width="14.6" height="3.2" fill="#0f6f7a" fill-opacity="0.55" stroke="#0f6f7a" stroke-width="1.1"/><path d="M2.4 6.8V21.4H14.6V6.8" fill="none" stroke="#0f6f7a" stroke-width="1.2"/><path d="M5.5 8.8V19.6M8.6 8.8V19.6M11.6 8.8V19.6" stroke="#0f6f7a" stroke-width="1.3" stroke-linecap="round"/></svg></div><div class="sep" style="top:757px"></div><div class="cb" style="top:767px"></div><span class="c blk" style="left:68px;top:757px;letter-spacing:0.0px">TT476</span><span class="c lnk" style="left:232px;top:757px;letter-spacing:-0.117px">Deal Pipeline</span><span class="c blk" style="left:892px;top:757px;letter-spacing:-1.75px">--</span><span class="c blk" style="left:1355px;top:757px;letter-spacing:0.083px">High</span><span class="c blk" style="left:1484px;top:757px;letter-spacing:-0.237px">Clarke Kent</span><div class="ic" style="left:1774px;top:764.5px"><svg width="24" height="22" viewBox="0 0 24 22"><path d="M13.9 3.7H5.2Q2.1 3.7 2.1 6.8V17.3Q2.1 20.4 5.2 20.4H13.8Q16.9 20.4 16.9 17.3V15.5" fill="none" stroke="#0f6f7a" stroke-width="1.8"/><g transform="translate(6.7 17.0) rotate(-46)"><path d="M0 0L3.8 -1.9H19.8A1.9 1.9 0 0 1 19.8 1.9H3.8Z" fill="none" stroke="#0f6f7a" stroke-width="1.25" stroke-linejoin="round"/><path d="M16.6 -1.9V1.9" stroke="#0f6f7a" stroke-width="1.25"/></g></svg></div><div class="ic" style="left:1810.8px;top:764px"><svg width="17" height="23" viewBox="0 0 17 23"><rect x="4.7" y="1.7" width="7.9" height="1.9" fill="none" stroke="#0f6f7a" stroke-width="1.1"/><rect x="1.2" y="3.6" width="14.6" height="3.2" fill="#0f6f7a" fill-opacity="0.55" stroke="#0f6f7a" stroke-width="1.1"/><path d="M2.4 6.8V21.4H14.6V6.8" fill="none" stroke="#0f6f7a" stroke-width="1.2"/><path d="M5.5 8.8V19.6M8.6 8.8V19.6M11.6 8.8V19.6" stroke="#0f6f7a" stroke-width="1.3" stroke-linecap="round"/></svg></div><div class="sep" style="top:793px"></div><div class="cb" style="top:803px"></div><span class="c blk" style="left:68px;top:793px;letter-spacing:0.0px">TT477</span><span class="c lnk" style="left:232px;top:793px;letter-spacing:-0.02px;text-decoration:underline">Ticket TTR76</span><span class="c lnk" style="left:892px;top:793px;letter-spacing:-0.175px">Chris Kogan</span><span class="c blk" style="left:1234px;top:793px;letter-spacing:-0.1px">Closed</span><span class="c blk" style="left:1355px;top:793px;letter-spacing:0.083px">High</span><span class="c blk" style="left:1484px;top:793px;letter-spacing:-0.237px">Clarke Kent</span><div class="ic" style="left:1774px;top:800.5px"><svg width="24" height="22" viewBox="0 0 24 22"><path d="M13.9 3.7H5.2Q2.1 3.7 2.1 6.8V17.3Q2.1 20.4 5.2 20.4H13.8Q16.9 20.4 16.9 17.3V15.5" fill="none" stroke="#0f6f7a" stroke-width="1.8"/><g transform="translate(6.7 17.0) rotate(-46)"><path d="M0 0L3.8 -1.9H19.8A1.9 1.9 0 0 1 19.8 1.9H3.8Z" fill="none" stroke="#0f6f7a" stroke-width="1.25" stroke-linejoin="round"/><path d="M16.6 -1.9V1.9" stroke="#0f6f7a" stroke-width="1.25"/></g></svg></div><div class="ic" style="left:1810.8px;top:800px"><svg width="17" height="23" viewBox="0 0 17 23"><rect x="4.7" y="1.7" width="7.9" height="1.9" fill="none" stroke="#0f6f7a" stroke-width="1.1"/><rect x="1.2" y="3.6" width="14.6" height="3.2" fill="#0f6f7a" fill-opacity="0.55" stroke="#0f6f7a" stroke-width="1.1"/><path d="M2.4 6.8V21.4H14.6V6.8" fill="none" stroke="#0f6f7a" stroke-width="1.2"/><path d="M5.5 8.8V19.6M8.6 8.8V19.6M11.6 8.8V19.6" stroke="#0f6f7a" stroke-width="1.3" stroke-linecap="round"/></svg></div><div class="sep" style="top:829px"></div>
<div class="abs" style="left:220px;top:795px;width:127px;height:26px;border:4px solid #f4680f;border-radius:3px"></div>
<div class="abs" style="left:1781px;top:734px;width:70px;height:70px;border-radius:50%;background:#045da6;box-shadow:2px 6px 18px rgba(0,0,0,0.2)"></div>
<svg class="abs" style="left:1796px;top:755px" width="42" height="34" viewBox="0 0 42 34"><ellipse cx="20.35" cy="14.1" rx="18.35" ry="13.1" fill="#fff"/><path d="M7.6 22.6C8.6 26.3 7.2 29.6 4.4 31.9C9.6 31.8 14.2 29.6 18 26.9Z" fill="#fff"/></svg>
</body></html>
